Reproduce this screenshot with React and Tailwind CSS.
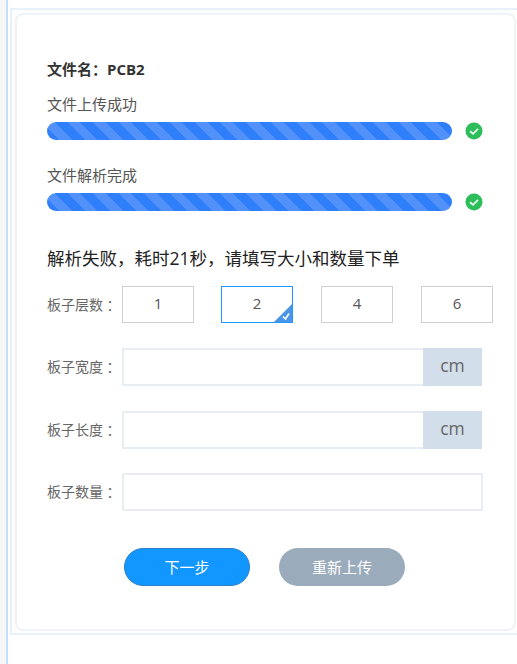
const font = { fontFamily: '"Open Sans", "Noto Sans CJK SC", sans-serif' };

function Bar({ label, top }) {
  return (
    <div className={top}>
      <div className="h-[20px] text-[15px] leading-[20px] text-[#555]">{label}</div>
      <div className="mt-[8px] flex items-center">
        <div className="h-[18px] w-[405px] rounded-full bg-[repeating-linear-gradient(45deg,#2f7ffb_0px,#2f7ffb_9px,#5291fa_9px,#5291fa_18px)]" />
        <svg viewBox="0 0 18 18" className="ml-[13px] h-[18px] w-[18px]">
          <circle cx="9" cy="9" r="8.5" fill="#2dbd5a" />
          <path d="M5 9.2 8 11.8 13 6.8" fill="none" stroke="#e8f8ee" strokeWidth="1.8" />
        </svg>
      </div>
    </div>
  );
}

function Layer({ n, active, cls = "" }) {
  return (
    <div className={`relative flex h-[37px] w-[72px] items-center justify-center overflow-hidden border pb-[2px] text-[15px] text-[#555] ${active ? "border-[#1f97ff]" : "border-[#d0d0d0]"} ${cls}`}>
      {n}
      {active && (
        <svg viewBox="0 0 18 18" className="absolute right-0 bottom-0 h-[18px] w-[18px]">
          <path d="M18 0V18H0Z" fill="#4a95e8" />
          <path d="M9 12.5 11.5 15 15 9.5" fill="none" stroke="#fff" strokeWidth="1.6" />
        </svg>
      )}
    </div>
  );
}

function Label({ text }) {
  return (
    <div className="flex w-[75px] shrink-0 text-[14px] leading-[20px] whitespace-nowrap text-[#666]">
      {text}
      <span className="font-['Noto_Sans_CJK_JP']">：</span>
    </div>
  );
}

function Field({ label, unit, top }) {
  return (
    <div className={`flex items-center ${top}`}>
      <Label text={label} />
      <div className={`flex h-[38px] ${unit ? "w-[360px]" : "w-[361px]"} border-2 border-[#e8edf4] ${unit ? "border-r-0" : ""}`}>
        <div className="flex-1 bg-white" />
        {unit && <div className="-my-[2px] flex w-[59px] items-center justify-center bg-[#d3deeb] pb-[3px] text-[17.5px] text-[#666]">{unit}</div>}
      </div>
    </div>
  );
}

export default function App() {
  return (
    <div style={font} className="flex h-[664px] w-[517px] overflow-hidden bg-white">
      <div className="w-[6px] shrink-0 bg-[#f6f6f6]" />
      <div className="w-[2px] shrink-0 bg-[#c5e0fa]" />
      <div className="flex-1 pt-2 pl-[2px]">
        <div className="h-[627px] border-y-2 border-l-2 border-[#e8f1fa] pt-[3px] pl-[3px]">
          <div className="h-[618px] w-[501px] rounded-[8px] border-2 border-[#eef3f9] pt-[44px] pl-[30px]">
            <div className="h-[20px] text-[15px] leading-[20px] font-bold text-[#333]">文件名：PCB2</div>
            <Bar label="文件上传成功" top="mt-[15px]" />
            <Bar label="文件解析完成" top="mt-[25px]" />
            <div className="mt-[35px] h-[24px] text-[17.5px] leading-[24px] text-[#222]">解析失败，耗时21秒，请填写大小和数量下单</div>
            <div className="mt-[16px] flex items-center">
              <Label text="板子层数" />
              <Layer n="1" />
              <Layer n="2" active cls="ml-[27px]" />
              <Layer n="4" cls="ml-[28px]" />
              <Layer n="6" cls="ml-[28px]" />
            </div>
            <Field label="板子宽度" unit="cm" top="mt-[25px]" />
            <Field label="板子长度" unit="cm" top="mt-[25px]" />
            <Field label="板子数量" top="mt-[24px]" />
            <div className="mt-[37px] ml-[77px] flex gap-[29px]">
              <div className="flex h-[38px] w-[126px] items-center justify-center rounded-full border border-[#2f80c8] bg-[#1296ff] text-[15px] text-white">下一步</div>
              <div className="flex h-[38px] w-[126px] items-center justify-center rounded-full bg-[#9aabbc] text-[15px] text-white">重新上传</div>
            </div>
          </div>
        </div>
      </div>
    </div>
  );
}
